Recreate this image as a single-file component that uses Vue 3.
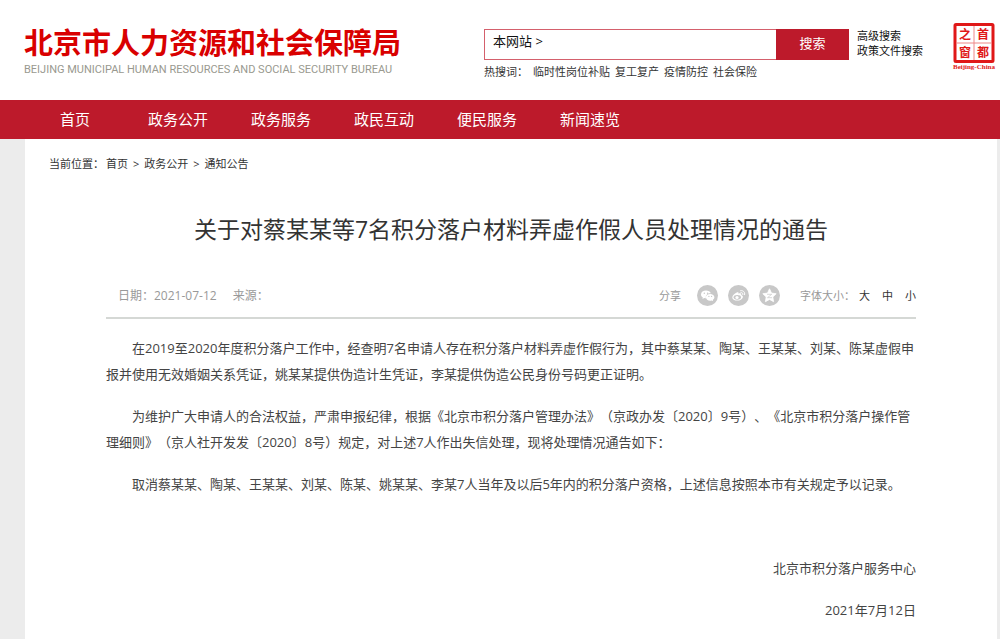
<script setup>
import { ref } from "vue";

let keyword = ref("");
let textSize = ref("small");

let hotWords = ["临时性岗位补贴", "复工复产", "疫情防控", "社会保险"];
let menu = ["首页", "政务公开", "政务服务", "政民互动", "便民服务", "新闻速览"];
let crumbs = ["首页", "政务公开", "通知公告"];
let sizes = [
  { name: "large", label: "大" },
  { name: "middle", label: "中" },
  { name: "small", label: "小" },
];

let paragraphs = [
  "在2019至2020年度积分落户工作中，经查明7名申请人存在积分落户材料弄虚作假行为，其中蔡某某、陶某、王某某、刘某、陈某虚假申报并使用无效婚姻关系凭证，姚某某提供伪造计生凭证，李某提供伪造公民身份号码更正证明。",
  "为维护广大申请人的合法权益，严肃申报纪律，根据《北京市积分落户管理办法》（京政办发〔2020〕9号）、《北京市积分落户操作管理细则》（京人社开发发〔2020〕8号）规定，对上述7人作出失信处理，现将处理情况通告如下：",
  "取消蔡某某、陶某、王某某、刘某、陈某、姚某某、李某7人当年及以后5年内的积分落户资格，上述信息按照本市有关规定予以记录。",
];
</script>

<template>
  <div class="page">
    <header class="header">
      <a href="#" class="logo">
        <span class="logo-cn">北京市人力资源和社会保障局</span>
        <span class="logo-en">BEIJING MUNICIPAL HUMAN RESOURCES AND SOCIAL SECURITY BUREAU</span>
      </a>
      <div class="search">
        <form class="search-form" @submit.prevent>
          <div class="search-box">
            <label for="keyword">本网站 &gt;</label>
            <input type="text" id="keyword" v-model="keyword" />
          </div>
          <button type="submit" class="search-btn">搜索</button>
        </form>
        <div class="hot">
          <span class="hot-label">热搜词：</span>
          <a href="#" v-for="word in hotWords" :key="word">{{ word }}</a>
        </div>
      </div>
      <div class="search-links">
        <a href="#">高级搜索</a>
        <a href="#">政策文件搜索</a>
      </div>
      <a href="#" class="seal">
        <svg width="46" height="48" viewBox="0 0 46 48">
          <rect x="3" y="2.500" width="38" height="37" rx="1" fill="#fff" stroke="#e01818" stroke-width="3" />
          <path d="M22 4v34M5 21h34" stroke="#e88" stroke-width="1" />
          <g class="seal-char">
            <text x="13" y="17">之</text>
            <text x="31" y="17">首</text>
            <text x="13" y="35">窗</text>
            <text x="31" y="35">都</text>
          </g>
          <text class="seal-en" x="22" y="47">Beijing-China</text>
        </svg>
      </a>
    </header>

    <nav class="nav">
      <a href="#" v-for="item in menu" :key="item">{{ item }}</a>
    </nav>

    <main class="panel">
      <div class="crumbs">
        <span class="crumbs-label">当前位置：</span>
        <template v-for="(crumb, i) in crumbs" :key="crumb">
          <span v-if="i > 0" class="arrow">&gt;</span>
          <a href="#">{{ crumb }}</a>
        </template>
      </div>

      <article class="article">
        <h1>关于对蔡某某等7名积分落户材料弄虚作假人员处理情况的通告</h1>
        <div class="meta">
          <span class="date">日期：2021-07-12</span>
          <span>来源：</span>
          <div class="share">
            <span>分享</span>
            <button type="button" aria-label="微信">
              <svg viewBox="0 0 21 21">
                <circle cx="10.500" cy="10.500" r="10.500" fill="#c8c8c8" />
                <path d="M9 5.500c-2.800 0-5 1.700-5 3.900 0 1.300.7 2.300 1.900 3l-.5 1.600 1.900-1c.6.2 1.100.2 1.700.2-.8-3 1.500-5.100 4.800-5C13.200 6.600 11.400 5.500 9 5.500z" fill="#fff" />
                <path d="M13.200 8.900c-2.500 0-4.300 1.500-4.300 3.400s1.900 3.400 4.300 3.400c.5 0 1-.1 1.500-.2l1.500.8-.4-1.400c1-.6 1.600-1.500 1.600-2.600 0-1.900-1.900-3.400-4.200-3.400z" fill="#fff" />
                <g fill="#c8c8c8">
                  <circle cx="7.300" cy="8.200" r=".7" /><circle cx="10.600" cy="8.200" r=".7" />
                  <circle cx="11.900" cy="11.400" r=".6" /><circle cx="14.600" cy="11.400" r=".6" />
                </g>
              </svg>
            </button>
            <button type="button" aria-label="微博">
              <svg viewBox="0 0 21 21">
                <circle cx="10.500" cy="10.500" r="10.500" fill="#c8c8c8" />
                <path d="M8.800 7.500c1.200-.5 2 0 1.700 1.200 1.700-.7 3.200-.3 2.700 1.200 1.400.4 2 1.300 1.600 2.500-.6 1.900-3 3.200-5.600 3.200-2.700 0-4.900-1.300-4.900-3.200 0-1.700 2-4 4.500-4.900z" fill="#fff" />
                <ellipse cx="9.300" cy="12.300" rx="3.700" ry="2.400" fill="#c8c8c8" />
                <circle cx="9" cy="12.500" r="1.600" fill="#fff" />
                <path d="M12.600 5.700c2.600-.6 4.700 1.500 4 4M12.900 7.600c1.400-.3 2.400.7 2 2" fill="none" stroke="#fff" stroke-width="1" stroke-linecap="round" />
              </svg>
            </button>
            <button type="button" aria-label="QQ空间">
              <svg viewBox="0 0 21 21">
                <circle cx="10.500" cy="10.500" r="10.500" fill="#c8c8c8" />
                <path d="M10.500 3.800l2 4.300 4.700.6-3.400 3.300.8 4.700-4.100-2.300-4.100 2.300.8-4.700-3.400-3.300 4.700-.6z" fill="#fff" stroke="#fff" stroke-width=".8" stroke-linejoin="round" />
                <path d="M8 9.300h4.700l-4.200 3.400h4.500" fill="none" stroke="#c8c8c8" stroke-width=".7" />
              </svg>
            </button>
          </div>
          <div class="sizes">
            <span>字体大小：</span>
            <button type="button" v-for="size in sizes" :key="size.name" @click="textSize = size.name">{{ size.label }}</button>
          </div>
        </div>

        <div class="content" :class="textSize">
          <p v-for="(text, i) in paragraphs" :key="i">{{ text }}</p>
          <div class="sign">
            <p>北京市积分落户服务中心</p>
            <p>2021年7月12日</p>
          </div>
        </div>
      </article>
    </main>
  </div>
</template>

<style>
body {
  margin: 0;
  background: #ececec;
}
</style>

<style scoped>
.page {
  display: flex;
  flex-direction: column;
  min-height: 100vh;
  font-family: "Open Sans", "Noto Sans CJK SC", sans-serif;
  font-size: 11px;
  line-height: 16px;
  color: #333;
  text-spacing-trim: space-all;
}

a {
  color: inherit;
  text-decoration: none;
}

button {
  padding: 0;
  border: 0;
  background: none;
  font: inherit;
  color: inherit;
  cursor: pointer;
}

.header {
  display: flex;
  align-items: flex-start;
  box-sizing: border-box;
  height: 100px;
  padding: 22px 2px 0 24px;
  background: #fff;
}

.logo {
  display: flex;
  flex-direction: column;
  flex: none;
  width: 460px;
  white-space: nowrap;
}

.logo-cn {
  font-size: 29px;
  font-weight: bold;
  line-height: 42px;
  color: #d90000;
}

.logo-en {
  font-family: Roboto, "Liberation Sans", sans-serif;
  font-size: 11px;
  line-height: 12px;
  color: #99998f;
}

.search {
  flex: 1;
  max-width: 365px;
  padding-top: 7px;
}

.search-form {
  display: flex;
  height: 31px;
}

.search-box {
  display: flex;
  flex: 1;
  border: 1px solid #d4606c;
  border-right: 0;
}

.search-box label {
  padding-left: 8px;
  font-size: 13px;
  line-height: 22px;
  color: #111;
}

.search-box input {
  flex: 1;
  min-width: 0;
  border: 0;
  outline: none;
  background: none;
}

.search-btn {
  width: 73px;
  padding-bottom: 4px;
  background: #bd1a2b;
  font-size: 13px;
  color: #fff;
}

.hot {
  display: flex;
  gap: 5px;
  padding-top: 4px;
  white-space: nowrap;
}

.search-links {
  display: flex;
  flex-direction: column;
  padding: 6px 0 0 8px;
  line-height: 15px;
  color: #111;
  white-space: nowrap;
}

.seal {
  margin-left: auto;
}

.seal svg {
  display: block;
}

.seal text {
  fill: #e01818;
  text-anchor: middle;
}

.seal-char {
  font-size: 12px;
  font-weight: bold;
}

.seal-en {
  font-family: "Liberation Serif", serif;
  font-size: 7px;
  font-weight: bold;
}

.nav {
  display: flex;
  gap: 43px;
  padding-left: 60px;
  background: #bd1a2b;
  font-size: 15px;
  line-height: 39px;
  color: #fff;
}

.nav a:first-child {
  margin-right: 15px;
}

.panel {
  flex: 1;
  margin: 0 3px 0 25px;
  background: #fff;
}

.crumbs {
  display: flex;
  padding: 17px 24px 0;
}

.crumbs-label {
  padding-right: 2px;
}

.arrow {
  padding: 0 5px;
}

.article {
  padding: 0 81px 16px;
}

h1 {
  margin: 39px 0 0;
  font-size: 23px;
  font-weight: normal;
  line-height: 36px;
  text-align: center;
}

.meta {
  display: flex;
  align-items: center;
  height: 43px;
  margin-top: 27px;
  padding-left: 12px;
  border-bottom: 2px solid #d5d8d5;
  color: #999;
}

.date,
.meta > span {
  font-size: 12px;
}

.date {
  margin-right: 16px;
}

.share {
  display: flex;
  align-items: center;
  gap: 10px;
  margin-left: auto;
}

.share span {
  margin-right: 6px;
}

.share svg {
  display: block;
  width: 21px;
  height: 21px;
}

.sizes {
  display: flex;
  gap: 12px;
  margin-left: 20px;
}

.sizes span {
  margin-right: -8px;
}

.sizes button {
  color: #333;
}

.content {
  padding-top: 16px;
  font-size: 13px;
  line-height: 26px;
  color: #444;
}

.content.middle {
  font-size: 15px;
}

.content.large {
  font-size: 17px;
}

.content p {
  margin: 0 0 16px;
  text-indent: 2em;
}

.sign {
  padding-top: 42px;
  text-align: right;
}

.sign p:last-child {
  margin-bottom: 0;
}
</style>
